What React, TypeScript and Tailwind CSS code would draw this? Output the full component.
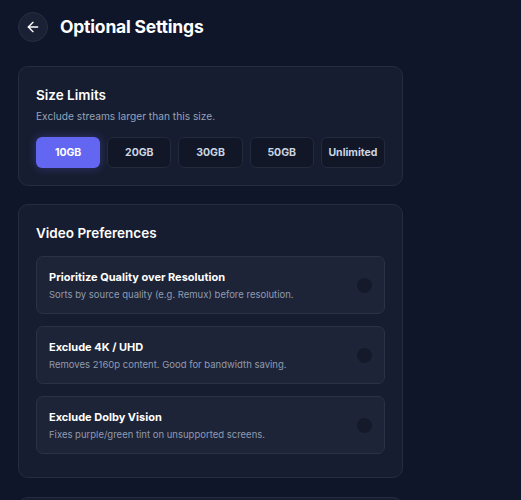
import React from 'react'
import { ArrowLeft } from 'lucide-react'

const sizes = ['10GB', '20GB', '30GB', '50GB', 'Unlimited']

const prefs = [
  { title: 'Prioritize Quality over Resolution', desc: 'Sorts by source quality (e.g. Remux) before resolution.' },
  { title: 'Exclude 4K / UHD', desc: 'Removes 2160p content. Good for bandwidth saving.' },
  { title: 'Exclude Dolby Vision', desc: 'Fixes purple/green tint on unsupported screens.' },
]

export default function App() {
  return (
    <div className="min-h-[500px] h-[500px] overflow-hidden bg-[#0f1629] font-['Inter',sans-serif] text-white">
      <div className="w-[385px] ml-[18px] pt-[12px]">
        {/* Header */}
        <div className="flex items-center gap-[12px] h-[30px]">
          <button className="w-[30px] h-[30px] rounded-full bg-[#1a2134] border border-[#262e42] flex items-center justify-center">
            <ArrowLeft size={16} strokeWidth={2} className="text-white" />
          </button>
          <h1 className="text-[17.5px] font-bold tracking-[-0.2px]">Optional Settings</h1>
        </div>

        {/* Size Limits */}
        <section className="mt-[24px] rounded-[10px] bg-[#171d30] border border-[#252c40] px-[17px] pt-[18px] pb-[17px]">
          <h2 className="text-[13.5px] font-semibold leading-[20px]">Size Limits</h2>
          <p className="mt-[3px] text-[10.2px] leading-[16px] text-[#94a3b8]">Exclude streams larger than this size.</p>
          <div className="mt-[13px] grid grid-cols-5 gap-[7px]">
            {sizes.map((s, i) => (
              <button
                key={s}
                className={
                  i === 0
                    ? 'h-[31px] rounded-[6px] bg-[#6366f1] text-white text-[10.5px] font-bold shadow-[0_0_10px_rgba(99,102,241,0.35)]'
                    : 'h-[31px] rounded-[6px] bg-[#111727] border border-[#222a3d] text-[#cbd5e1] text-[10.5px] font-bold'
                }
              >
                {s}
              </button>
            ))}
          </div>
        </section>

        {/* Video Preferences */}
        <section className="mt-[18px] rounded-[10px] bg-[#171d30] border border-[#252c40] px-[17px] pt-[18px] pb-[23px]">
          <h2 className="text-[13.5px] font-semibold leading-[20px]">Video Preferences</h2>
          <div className="mt-[13px] flex flex-col gap-[12px]">
            {prefs.map((p) => (
              <div
                key={p.title}
                className="h-[58px] rounded-[7px] bg-[#1e2437] border border-[#2a3247] pl-[12px] pr-[12px] flex items-center justify-between"
              >
                <div>
                  <div className="text-[11px] font-bold leading-[16px]">{p.title}</div>
                  <div className="mt-[2px] text-[9.5px] leading-[15px] text-[#8f9bb0]">{p.desc}</div>
                </div>
                <div className="w-[15px] h-[15px] rounded-full bg-[#141a29]" />
              </div>
            ))}
          </div>
        </section>

        <section className="mt-[19px] h-[60px] rounded-[10px] bg-[#171d30] border border-[#252c40]" />
      </div>
    </div>
  )
}
